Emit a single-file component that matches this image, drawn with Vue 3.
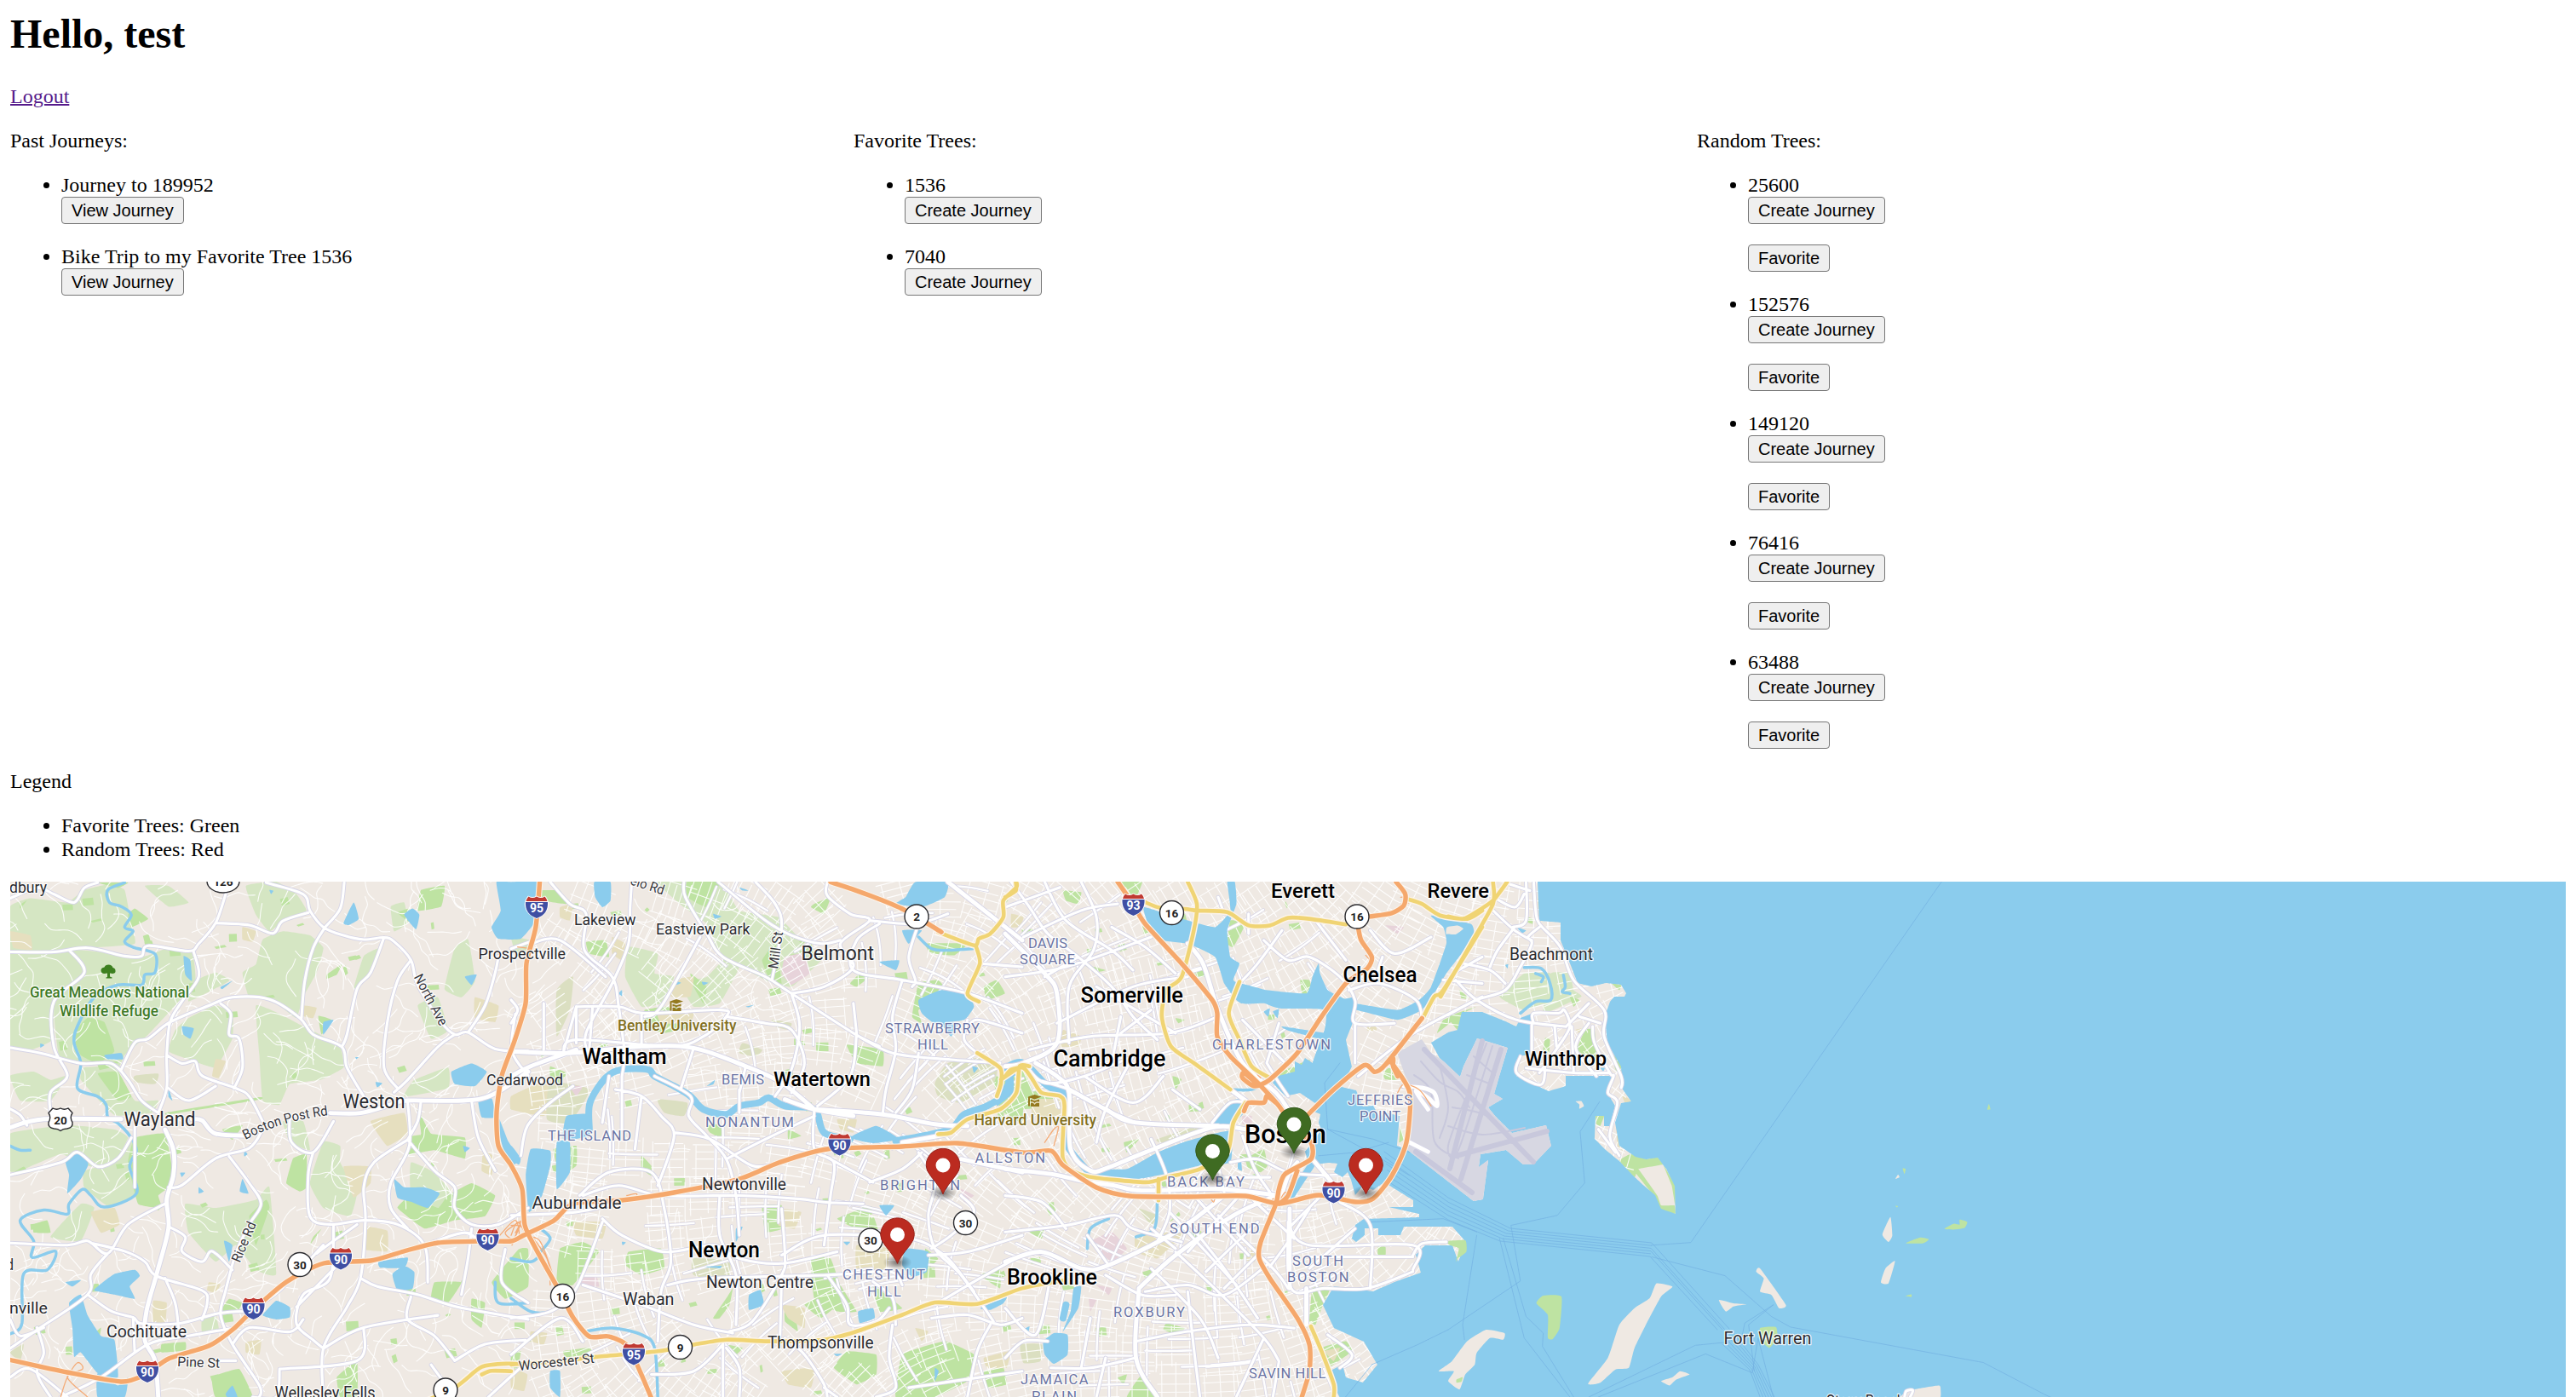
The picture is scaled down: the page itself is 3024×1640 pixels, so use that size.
<script setup>
const pastJourneys = ['Journey to 189952', 'Bike Trip to my Favorite Tree 1536']
const favoriteTrees = [1536, 7040]
const randomTrees = [25600, 152576, 149120, 76416, 63488]

/* Survey sheets: origin and scale of each sheet's local grid. */
const sheets = {
  A: [0, 880, 2.529, 2.063],
  B: [600, 1030, 2.6133, 2.5705],
  C: [1180, 1030, 2.8, 2.5705],
  D: [1700, 1030, 2.24, 2.5705],
  Z: [0, 0, 1, 1],
}

function points(sheet, s) {
  const [ox, oy, sx, sy] = sheets[sheet]
  return s.split(' ').map((p) => {
    const [x, y] = p.split(',').map(Number)
    return [ox + x / sx, oy + y / sy]
  })
}
const r = (n) => Math.round(n * 10) / 10

function curve(p, closed, k) {
  const n = p.length
  const at = (i) => (closed ? p[(i + n) % n] : p[Math.max(0, Math.min(n - 1, i))])
  let d = `M${r(p[0][0])} ${r(p[0][1])}`
  const last = closed ? n : n - 1
  for (let i = 0; i < last; i++) {
    const a = at(i - 1), b = at(i), c = at(i + 1), e = at(i + 2)
    d += `C${r(b[0] + (c[0] - a[0]) * k)} ${r(b[1] + (c[1] - a[1]) * k)} ${r(c[0] - (e[0] - b[0]) * k)} ${r(c[1] - (e[1] - b[1]) * k)} ${r(c[0])} ${r(c[1])}`
  }
  return closed ? d + 'Z' : d
}
function build(group, closed, k) {
  let d = ''
  for (const sheet in group) for (const s of group[sheet]) d += curve(points(sheet, s), closed, k)
  return d
}

const wood = build({
  A: [
    '30,380 90,360 200,370 250,340 330,325 370,340 385,400 400,470 260,480 120,490 30,485',
    '30,490 205,485 250,540 160,610 160,700 100,725 30,720',
    '205,485 300,490 430,500 500,480 570,490 580,560 520,620 440,690 370,740 350,770 240,755 175,740 160,610 250,540',
    '30,790 100,780 150,800 200,790 150,850 60,850',
    '250,770 340,770 400,850 470,850 450,880 340,885 240,800',
    '730,330 820,320 880,350 910,390 850,410 800,440 760,400',
    '780,460 840,440 920,450 960,480 940,540 900,600 880,650 830,620 800,600 740,600 720,540 760,520',
    '760,620 830,640 900,670 950,690 1010,720 1020,770 950,800 860,810 830,860 780,850 770,740',
    '30,930 200,910 340,920 380,940 340,1000 270,1010 180,980 60,1020 30,1020',
    '250,1020 340,1000 400,940 400,1080 320,1105 250,1060',
    '550,1100 640,1110 760,1090 800,1060 820,1270 760,1260 700,1200 640,1240 560,1170',
    '960,950 1010,960 1010,1000 1060,1070 1040,1130 960,1110 920,1050',
    '1350,480 1390,460 1410,560 1370,600 1320,580',
    '1080,500 1130,480 1100,540 1050,580', '580,560 640,540 680,560 560,610',
    '640,770 690,700 690,640 640,620 560,650 520,680 500,730 560,750',
    '840,900 860,950 920,970 900,900', '150,1180 240,1100 280,1110 240,1190',
    '1240,620 1300,600 1330,680 1280,700', '1220,1000 1280,1020 1340,1070 1300,1110 1220,1070',
    '1160,380 1200,370 1210,420 1170,440', '430,330 500,330 560,370 500,380',
    '1230,800 1330,770 1330,820 1200,840', '600,1380 640,1370 650,1410 600,1410',
  ],
  B: [
    '360,210 450,230 440,290 500,300 460,380 400,390 350,300',
    '450,14 640,14 700,100 820,120 900,200 960,240 860,330 780,310 640,230 600,140 530,90',
    '520,320 600,300 660,240 700,270 640,380 560,390',
    '0,180 60,190 60,210 20,240',
  ],
  C: [],
  D: ['200,290 270,290 270,370 200,400 135,360', '270,290 320,290 330,340 350,360 250,410'],
}, true, 0.06)

const park = build({
  A: [
    '400,940 490,930 510,1010 500,1060 470,1080 480,1110 410,1100 380,1000',
    '870,990 910,980 910,1060 890,1070 850,1050',
    '1240,870 1280,930 1380,940 1380,990 1290,970 1210,980 1250,930',
    '1180,1110 1220,1080 1300,1110 1330,1080 1400,1050 1470,1080 1440,1130 1350,1140 1260,1160',
    '215,690 260,650 310,660 340,730 290,760 240,740', '630,1520 710,1500 750,1568 640,1568',
    '680,1330 720,1340 700,1365 655,1360', '1250,340 1320,330 1310,380 1240,390',
    '1290,1290 1370,1290 1330,1340 1280,1330', '1460,1290 1540,1210 1568,1210 1568,1300 1500,1330',
    '380,400 400,385 440,410 390,430', '970,545 1015,520 1000,545 970,555', '930,1180 955,1160 920,1200',
    '945,645 985,655 955,690', '100,1150 140,1140 150,1170 100,1170', '480,1440 550,1435 550,1455 480,1460',
    '290,785 350,780 390,840 350,850', '740,1130 790,1090 800,1110 760,1200',
    '1400,1330 1440,1340 1430,1400 1400,1380', '1000,1520 1060,1480 1060,1568 1010,1568',
    '660,920 720,910 690,945', '30,1030 70,1010 80,1020', '1180,395 1215,385 1220,420', '290,322 380,322 350,335',
    '60,375 80,365 60,385', '260,1430 300,1400 290,1440', '500,878 770,842 770,848 500,884',
  ],
  B: [
    '230,195 290,190 300,240 240,230', '540,14 640,14 600,90 540,60', '770,250 810,200 830,320 790,300',
    '410,400 480,390 520,430 560,450 470,470 400,450', '550,290 600,330 590,380 560,330',
    '1250,320 1310,310 1340,350 1250,400 1260,440 1230,420', '1030,505 1140,520 1140,570 1060,560',
    '1450,330 1490,310 1515,350 1460,370', '150,1120 220,1100 270,1130 190,1230 140,1220',
    '360,1130 460,1120 470,1180 400,1200 350,1170', '770,990 830,990 830,1060 780,1070',
    '1000,1030 1080,1000 1120,1050 1060,1060', '920,1150 980,1150 1010,1230 1060,1310 1000,1310 930,1270',
    '990,1480 1030,1430 1120,1440 1120,1500 1060,1530', '1200,1440 1330,1400 1420,1440 1400,1520 1300,1568 1180,1568',
    '160,1430 240,1420 240,1450 170,1450', '1110,1230 1200,1300 1130,1310', '1480,600 1568,620 1568,740 1500,700',
    '80,40 150,40 170,80 100,70', '0,670 70,660 60,700 0,700', '130,820 200,810 200,870 150,900',
    '120,570 170,590 150,620 120,600', '930,80 980,60 960,110 920,90', '1270,200 1400,200 1360,235 1290,230',
    '1040,320 1070,290 1100,300 1060,330', '850,760 890,780 850,790', '600,750 640,745 650,790 610,770',
    '400,840 430,870 430,900 400,880', '680,1240 670,1290 640,1330 620,1330 660,1270',
    '840,1300 870,1320 880,1370 840,1340', '0,1440 30,1430 20,1480 0,1480', '1450,1490 1510,1480 1520,1530 1460,1540',
    '1440,1200 1500,1180 1500,1240', '660,1410 710,1420 690,1440', '1270,1120 1310,1150 1280,1180',
    '1110,1020 1140,1110 1130,1150 1090,1150', '900,1290 960,1260 1000,1290 950,1330', '500,380 540,450 520,460',
  ],
  C: [
    '790,850 850,820 862,870 840,890 800,880', '20,610 60,580 90,640 170,670 170,690 20,700',
    '1240,590 1270,570 1290,610 1250,610', '1010,1240 1070,1235 1040,1300 1020,1350 1000,1340',
    '970,310 1000,310 1010,340 1060,350 1060,365 980,360', '190,40 250,45 240,80 200,70',
    '1040,1420 1120,1400 1140,1430 1060,1480', '400,1568 450,1500 500,1568', '880,600 1000,550 990,590',
    '530,1345 590,1360 570,1380 520,1365', '740,130 790,140 750,210 730,200', '380,14 450,14 430,60 390,40',
    '550,600 580,610 560,640', '250,260 330,280 300,285', '1300,750 1310,790 1295,800', '80,1070 130,1050 120,1090',
    '1225,1115 1250,1115 1250,1140 1225,1140', '660,1230 680,1240 670,1260', '560,425 590,430 570,440',
    '390,800 440,790 400,830', '540,1040 570,1010 575,1020', '900,640 950,600 1020,570 960,620',
    '370,1510 400,1500 390,1530', '500,90 590,110 600,160 520,110', '1440,430 1500,410 1420,470',
  ],
  D: [
    '360,460 385,460 390,560 340,520', '450,855 480,835 520,850 550,845 570,865 500,880 490,905',
    '485,880 500,880 550,960 560,990 595,990 597,1015 560,1005 540,960', '0,420 75,390 40,410 25,460',
    '388,720 410,720 400,750 390,745', '430,530 455,560 455,600 440,580', '210,120 222,125 222,140 208,135',
    '320,360 345,370 330,390', '430,320 455,325 450,340', '255,485 268,490 265,530 250,520', '30,340 55,365 35,365',
    '565,865 597,930 597,990 588,930',
  ],
}, true, 0.05)

const sand = build({
  A: [
    '1020,1010 1100,1010 1100,1050 1050,1085', '640,750 670,755 650,795 630,790', '1080,1155 1150,1165 1150,1215 1080,1210',
    '1100,900 1200,880 1210,930 1150,960', '270,1120 340,1110 355,1150 300,1170', '1410,600 1480,620 1470,660 1410,650',
    '730,1435 775,1430 770,1465 730,1460', '455,1335 495,1340 490,1390 455,1390', '30,440 90,450 95,485 40,480',
    '900,620 940,625 930,650 900,645', '720,430 760,440 750,465 720,460', '620,1290 655,1295 640,1315 615,1310',
    '1435,970 1465,985 1460,1030 1430,1020',
  ],
  B: [
    '450,410 560,400 550,440 460,440', '500,310 560,300 550,360 490,360', '0,660 90,620 170,650 100,720 0,700',
    '190,1040 290,1040 280,1090 200,1080', '830,1000 890,1010 870,1060 820,1050', '1060,1110 1160,1120 1150,1190 1060,1180',
    '830,1290 900,1300 900,1360 850,1330', '830,1490 930,1480 920,1540 850,1530', '1000,730 1060,730 1050,770 1010,760',
    '150,90 190,80 180,130 150,120', '310,180 350,200 340,250 310,230', '60,1370 110,1375 100,1410 60,1400',
    '1450,1450 1530,1430 1520,1480 1460,1480', '0,1480 50,1500 40,1550 0,1540', '1240,1360 1280,1370 1260,1400',
  ],
  C: ['190,460 250,480 240,510 180,510', '430,1080 590,1070 500,1150 430,1130', '1190,450 1220,450 1220,462 1190,462', '20,110 60,120 50,150 20,150', '780,1150 830,1110 820,1160', '1050,1430 1100,1420 1080,1460', '90,670 190,670 185,720 90,720'],
  D: ['455,650 482,675 465,680', '235,60 250,130 240,130', '440,700 450,810 465,830 445,810', '335,460 355,455 350,475'],
}, true, 0.05)

const olive = build({
  B: [
    '1340,560 1440,545 1490,570 1480,620 1380,680 1310,660 1300,620', '450,670 540,680 530,720 470,710',
    '710,500 770,520 750,540 700,530', '560,1150 670,1160 660,1220 560,1200', '120,620 240,640 180,740 110,730',
    '800,430 860,440 850,460 810,450', '140,340 190,300 180,400 140,480',
  ],
  C: ['500,790 660,740 640,770 520,800', '50,1410 120,1410 115,1460 60,1465', '440,1000 500,1020 480,1050'],
  A: ['400,790 470,785 460,810 400,805', '30,1460 70,1440 60,1480'],
}, true, 0.08)

const pink = build({
  B: ['840,240 900,230 915,290 860,325 830,290', '210,1210 260,1200 270,1235 215,1230', '180,630 220,630 200,660', '1380,940 1420,960 1390,980'],
  C: ['280,1100 350,1070 400,1120 350,1160', '300,1230 350,1240 340,1260', '275,1270 300,1275 280,1310', '780,720 810,720 810,745 780,745', '1250,145 1310,150 1290,170'],
}, true, 0.05)

const lakes = build({
  A: [
    '195,1000 220,975 250,980 262,1005 240,1040 200,1075 205,1030', '290,1300 340,1270 400,1260 415,1275 385,1300 400,1330 340,1320 280,1310',
    '205,1340 240,1320 260,1370 300,1420 340,1430 350,1520 290,1510 240,1460 220,1470 215,1400',
    '1170,1040 1200,1060 1260,1060 1305,1075 1270,1110 1220,1095 1180,1085', '780,1370 820,1335 860,1350 860,1375 820,1380',
    '1340,780 1400,760 1445,780 1410,815 1350,810', '1200,400 1225,385 1245,400 1235,435', '1165,1270 1200,1250 1230,1265 1225,1305 1180,1310',
    '1125,1240 1210,1230 1200,1255 1130,1255', '960,660 990,655 960,690', '540,670 575,675 565,700 545,690',
    '1420,850 1460,845 1470,890 1430,890', '1480,890 1510,950 1545,990 1540,1005 1500,980 1482,930',
    '1020,420 1050,370 1065,410 1035,425', '310,740 360,735 365,750 320,750', '545,500 565,510 570,560 550,545',
    '655,575 690,560 660,580', '720,1040 738,1075 712,1070', '665,1190 690,1200 680,1240', '1380,550 1415,545 1400,570',
    '290,1510 350,1540 380,1520 370,1568 290,1568', '500,820 512,850 500,840', '590,1060 605,1070 590,1075', '535,1025 550,1025 540,1035',
    '725,970 735,980 725,985', '120,712 132,716 120,722', '1375,960 1395,965 1380,975', '195,1290 240,1285 215,1300', '670,1560 690,1540 705,1568 675,1568',
    '800,340 812,342 805,350', '1115,805 1135,808 1120,818', '1055,745 1065,745 1058,750',
  ],
  B: [
    '0,14 90,14 75,130 30,185 -40,185 -60,150 -32,100 -45,14', '255,14 305,14 305,70 280,90 258,60', '1180,80 1210,60 1240,14 1340,14 1330,60 1260,90',
    '1200,160 1260,160 1220,200', '1250,370 1320,340 1400,350 1420,390 1390,430 1300,440 1260,410', '1320,440 1370,440 1350,480',
    '1130,255 1190,250 1180,280', '1210,1120 1280,1130 1275,1190 1230,1205 1200,1170', '730,1260 765,1245 775,1290 730,1305',
    '1065,1310 1110,1300 1115,1330 1070,1345', '690,1060 710,1055 690,1100', '60,820 120,825 120,870 95,960 55,1010 45,900',
    '140,800 180,800 180,890 140,940', '0,810 30,850 0,870', '170,720 245,715 240,780 160,790', '1130,990 1175,990 1150,1020',
    '1440,1300 1520,1265 1510,1285 1470,1305', '120,1490 150,1490 150,1568 120,1540', '1040,785 1120,750 1190,790 1110,802',
    '600,630 625,612 620,625', '720,390 745,385 730,392', '330,350 340,340 340,358', '500,312 522,318 505,325', '620,110 645,118 625,125',
    '585,315 605,318 590,325', '590,1175 645,1172 640,1180', '340,1100 352,1102 342,1110', '1020,1100 1040,1100 1030,1110', '1300,1480 1312,1490 1300,1520',
    '1415,570 1432,575 1420,590', '1500,640 1540,600 1540,650 1490,690', '990,1438 1015,1438 1000,1445', '700,30 730,40 710,40',
  ],
  C: [
    '770,320 860,340 990,350 1010,300 1030,260 1035,290 1060,340 1100,360 1150,380 1290,400 1360,370 1400,330 1450,200 1440,150 1400,115 1530,140 1540,170 1500,230 1450,290 1410,350 1370,400 1290,430 1150,400 1120,420 1110,600 1010,570 1050,460 1050,400 900,395 850,380 780,380',
    '455,90 530,110 600,130 690,150 740,100 730,14 755,14 760,80 730,160 740,240 770,260 750,310 780,330 780,380 760,370 720,320 690,240 600,200 520,190 470,140',
    '260,900 300,880 400,880 500,830 600,795 740,765 740,860 640,870 500,900 400,915 300,905', '730,680 785,665 785,710 740,750 680,740',
    '910,450 1050,470 1045,490 930,462', '125,1400 160,1375 205,1380 205,1440 160,1468 130,1440', '190,1370 215,1310 225,1240 250,1235 240,1300',
    '765,860 775,850 778,885 765,880', '60,1365 80,1355 75,1375', '850,405 870,395 865,420', '880,405 900,398 895,425',
  ],
  D: ['180,150 205,160 195,168', '150,265 158,262 156,275', '400,575 412,575 408,585'],
}, true, 0.07)

/* Harbour and open sea, following the shoreline from Revere round to Dorchester. */
const sea = build({
  Z: ['1805,1035 1807,1081 1832,1083 1832,1104 1843,1131 1852,1154 1868,1158 1885,1154 1903,1156 1909,1166 1907,1170 1895,1170 1890,1176 1884,1193 1887,1225 1903,1252 1905,1279 1915,1293 1903,1295 1896,1318 1901,1345 1920,1358 1932,1361 1946,1359 1956,1372 1966,1392 1967,1425 1950,1419 1943,1403 1930,1392 1917,1380 1901,1363 1885,1350 1872,1337 1873,1310 1883,1310 1883,1322 1890,1322 1896,1298 1887,1283 1892,1263 1870,1263 1838,1263 1838,1275 1818,1281 1780,1263 1783,1240 1796,1238 1798,1190 1785,1195 1780,1205 1765,1198 1740,1188 1716,1188 1711,1209 1700,1212 1680,1224 1690,1242 1714,1264 1718,1252 1734,1219 1770,1230 1754,1284 1764,1290 1747,1300 1755,1310 1775,1330 1815,1321 1821,1345 1800,1367 1788,1367 1768,1350 1738,1355 1736,1370 1747,1362 1741,1408 1730,1410 1651,1349 1640,1345 1643,1310 1625,1306 1620,1312 1612,1298 1600,1299 1592,1280 1575,1276 1587,1252 1580,1221 1591,1193 1591,1170 1573,1174 1555,1209 1541,1248 1532,1242 1528,1250 1520,1246 1520,1258 1501,1263 1494,1271 1509,1287 1526,1283 1544,1295 1543,1305 1550,1308 1548,1318 1551,1326 1544,1337 1532,1352 1537,1368 1559,1365 1570,1366 1566,1376 1576,1382 1582,1376 1586,1385 1591,1403 1600,1392 1612,1397 1625,1388 1659,1409 1659,1417 1630,1417 1666,1425 1666,1429 1601,1431 1591,1438 1587,1454 1592,1458 1602,1450 1602,1442 1618,1442 1618,1450 1644,1450 1648,1440 1705,1440 1721,1458 1712,1481 1705,1462 1673,1462 1662,1473 1668,1494 1637,1505 1612,1516 1566,1510 1553,1532 1566,1559 1601,1575 1617,1602 1600,1623 1580,1617 1576,1602 1560,1610 1567,1629 1575,1645 3020,1645 3020,1030'],
}, true, 0)

const islands = build({
  D: [
    '820,1180 888,1290 870,1300 850,1260 820,1250 830,1210 810,1190', '712,1275 750,1285 785,1288 750,1295 730,1310', '548,1225 590,1235 560,1265 520,1350 490,1420 475,1480 440,1485 400,1525 368,1528 420,1450 450,1350 490,1300 530,1270',
    '-25,1490 10,1460 50,1400 100,1365 148,1375 145,1395 110,1390 75,1435 70,1470 45,1500 30,1545 0,1520 15,1490', '560,1520 590,1508 610,1490 635,1500 600,1515 582,1533',
    '1163,1025 1168,1080 1158,1100 1142,1078', '1175,1158 1158,1225 1138,1222 1150,1180', '1195,1560 1225,1545 1290,1533 1295,1545 1290,1575 1190,1575',
    '1183,897 1187,905 1176,910', '335,676 350,675 357,690 345,698 345,685', '-3,150 25,145 40,155 20,172 -5,170',
  ],
}, true, 0.08)
const greenIslands = build({
  D: [
    '232,1285 250,1262 298,1265 293,1360 275,1393 262,1390 262,1320', '820,1360 862,1357 865,1390 845,1420 825,1400',
    '1305,1060 1330,1045 1345,1048 1345,1033 1365,1040 1358,1058 1330,1063', '1203,1104 1240,1087 1264,1092 1250,1104',
    '1195,878 1203,880 1200,895', '1202,1263 1218,1258 1218,1266', '1422,684 1426,700 1418,700', '1176,991 1183,992 1180,996',
    '22,1515 38,1508 35,1522 22,1525', '-5,1098 45,1095 48,1130 25,1150 20,1160 28,1120 5,1110',
  ],
}, true, 0.08)
const creeks = build({ D: ['200,272 245,275 268,320 270,370 230,375 190,410', '230,290 250,300 245,315', '303,295 308,330 300,345 320,350'] }, false, 0.16)

const airport = build({
  Z: ['1640,1236 1669,1220 1680,1236 1695,1246 1714,1264 1718,1252 1734,1219 1770,1230 1754,1284 1764,1290 1747,1300 1755,1310 1775,1330 1815,1321 1821,1345 1800,1367 1788,1367 1768,1350 1738,1355 1736,1370 1747,1362 1741,1408 1730,1410 1651,1349 1657,1283'],
}, true, 0)
const runways = build({ Z: ['1740,1222 1702,1372', '1762,1232 1715,1384', '1672,1232 1800,1364', '1709,1357 1816,1328', '1662,1352 1728,1400'] }, false, 0)
const taxiways = build({
  Z: ['1752,1228 1712,1350 1700,1345 1720,1290', '1668,1246 1690,1270 1712,1282 1725,1300', '1660,1262 1680,1282 1684,1340 1712,1360', '1690,1250 1700,1300 1690,1336', '1722,1262 1748,1272', '1730,1240 1755,1262', '1705,1300 1745,1310 1775,1342', '1700,1322 1740,1332 1790,1324', '1745,1225 1730,1262'],
}, false, 0.16)

const rivers = build({
  A: ['370,322 320,340 325,370 360,380 390,400 370,430 395,440 370,465 400,480 460,495 460,540 430,545 420,570 350,570 280,600 230,670 220,710 240,760 230,820 290,840 315,860 320,890 350,905 385,935 405,970 385,1010 405,1075 310,1108 270,1080 245,1065 205,1100 200,1125 130,1115 60,1140 100,1190 95,1230 165,1215 140,1260 70,1270 65,1390 30,1415', '30,960 60,970 90,970', '1470,1290 1480,1340 1568,1340'],
  B: ['90,1060 120,1090 90,1130', '0,1150 60,1160 90,1140', '0,1270 60,1310 120,1310 160,1280', '230,1370 310,1360 400,1380 440,1420 450,1568', '1250,180 1290,215 1340,220 1420,215'],
  C: ['270,1120 280,1060 340,1030', '430,1085 490,1060 500,980', '740,640 810,640 870,612'],
}, false, 0.16)
const wideRivers = build({
  B: ['240,760 242,680 290,605 340,580 420,580 440,600 500,630 550,660 590,700 660,715 700,690 760,680 790,665 840,690 930,700 960,770 1040,790', '1180,795 1340,762 1390,715 1460,690 1520,650 1530,600 1568,570'],
  C: ['0,575 60,560 140,630 195,650 205,700 200,800 270,885', '1005,870 930,975', '190,1330 200,1290'],
}, false, 0.16)

const streets = build({
  A: [
    '30,360 110,335 160,350 220,370 250,335 290,322', '30,490 160,490 260,480 370,500 420,500 440,475 560,488 590,470 640,420 670,350',
    '640,420 740,425 810,445 840,415 915,395', '790,322 900,350 920,390 960,430 1020,450 1080,460 1140,455 1170,465 1220,510 1240,570 1310,660 1350,690 1390,685 1470,725 1568,730',
    '965,430 1010,385 1022,322', '965,430 930,480 905,560 895,650', '205,485 250,540 160,610 160,720 200,790 150,830 150,880',
    '30,722 120,735 240,760 330,760 380,800 420,850 470,880', '575,490 590,550 540,610 505,660 495,740 495,820 470,880',
    '360,775 400,710 440,700 505,660 620,620 690,600 800,605 890,650 930,690 1015,720 1030,770 1080,840', '655,615 685,640 680,690 710,700 720,770 695,820',
    '495,740 540,760 580,755 600,790 700,820 740,840 780,900', '500,820 560,850 640,815', '1140,455 1100,540 1060,580 1030,690 1015,720',
    '1220,510 1180,560 1150,660 1140,770 1180,820', '1350,690 1300,720 1210,800 1170,830', '30,1030 180,1000 230,975 290,1010 350,990 390,940',
    '500,1060 540,1055 640,990 740,965 780,920', '680,985 740,1050 775,1100 740,1150 700,1220 670,1310 655,1370 690,1440 770,1540 770,1568',
    '30,1195 200,1200 260,1190 320,1220 380,1150 490,1100', '500,1155 550,1180 540,1215 600,1240 630,1215 690,1260',
    '270,1195 370,1215 430,1240 465,1275 600,1310 615,1340 600,1380', '320,1220 270,1270 260,1320 120,1400 30,1450',
    '260,1320 330,1360 395,1375 420,1390 530,1390 650,1365 740,1360', '860,890 865,950 930,975 990,900',
    '930,975 915,1030 920,1130 980,1150 1080,1140 1180,1150 1260,1200 1270,1290', '1210,850 1215,960 1160,1050 1160,1110 1210,1160',
    '1210,945 1110,1000 1080,1060 1085,1140 1070,1280 1030,1350 960,1450 960,1568', '1210,945 1290,1020 1350,1060 1350,1110 1400,1150 1480,1150 1568,1110',
    '1250,850 1240,900 1210,945', '990,1155 980,1280 900,1320 880,1390 930,1430 960,1450', '690,1440 740,1400 860,1410 900,1380',
    '940,1220 990,1190 1060,1150', '1070,1280 1120,1300 1240,1320 1360,1350 1568,1380', '1220,1325 1210,1380 1290,1420 1350,1480',
    '1400,1160 1390,1230 1370,1320', '1500,1210 1490,1290 1568,1340', '30,1380 60,1420 130,1400', '180,1568 300,1520 440,1440 560,1420 700,1400',
    '960,1450 1080,1400 1300,1370', '830,1500 1060,1480 1080,1400', '1400,850 1420,940 1470,1020', '1390,685 1440,620 1470,540 1480,500',
    '1530,640 1520,730 1568,790', '400,880 400,1060', '30,870 60,885 80,910', '110,1400 130,1460 110,1510 150,1568', '30,1520 90,1500 200,1568',
    '740,1360 830,1310 960,1200', '700,1480 640,1480', '750,1568 820,1568 830,1500', '880,1350 1000,1250', '1260,1200 1380,1170 1430,1200',
    '490,1280 520,1340 530,1400', '395,1375 400,1460', '1350,1480 1440,1440 1560,1430', '1280,1490 1350,1568', '1450,1568 1568,1480',
  ],
  B: [
    '120,14 180,80 230,110 225,220 310,300 330,390 350,540', '370,14 365,90 360,200 310,320 230,470 240,540', '530,14 535,60 600,170 650,240 780,300 860,350 1050,470 1130,510',
    '635,14 780,130 860,175 950,200 1010,190', '750,14 810,80 830,150 800,310', '970,14 970,55 1040,110 1100,130 1010,200 1050,270 960,330 860,350',
    '1130,140 1060,190 1050,280 1200,310 1400,350 1568,410', '1250,140 1220,240 1240,310 1230,330', '1340,110 1240,140 1100,130',
    '200,390 330,390 410,410 640,400 660,420 590,480 490,510 200,490 160,530', '580,180 460,390 410,420', '190,630 120,680 50,750 30,840',
    '440,600 550,660 545,720 600,780 660,850 690,960 700,1080', '660,420 780,440 860,460 900,560 860,650', '860,350 885,450 860,580 810,660',
    '1050,470 1170,530 1350,550 1500,560', '940,690 1040,600 1060,470', '930,700 930,820 990,860 980,960 960,1110', '660,850 780,790 930,720',
    '500,770 610,790 740,870 820,860', '320,640 400,660 460,720 500,780 450,930', '210,960 300,890 430,890 470,1000 490,1160 460,1250 450,1400',
    '220,960 330,930 460,960 700,960 880,970 960,980 1080,985', '0,1020 200,1010 340,980', '280,1030 340,1080 470,1130 620,1110 700,1150 830,1165 1000,1130',
    '640,960 640,1080 690,1200 690,1350', '830,1000 840,1140 830,1200 740,1340 670,1370', '480,1230 600,1210 970,1200 1160,1190 1200,1230',
    '220,1230 400,1290 560,1350 680,1375', '830,1200 825,1390', '970,1200 1030,1290 1040,1350 1120,1340 1160,1300', '1280,1140 1400,1130 1568,1080',
    '1300,1120 1220,1090 960,1080 830,1140', '1250,830 1300,920 1280,1020 1300,1120 1380,1200 1480,1340', '1380,960 1420,1010 1350,1080 1290,1120',
    '1100,920 1200,880 1260,830', '960,840 1110,920', '0,1330 120,1310 200,1240 280,1040', '0,1440 150,1330 220,1400', '1170,1350 1160,1450 1180,1540 1120,1568',
    '840,1390 900,1440 960,1530 970,1568', '650,1400 650,1568', '1400,1568 1430,1430 1470,1350', '1220,1540 1568,1490', '0,370 20,400 0,440',
    '60,200 150,190 290,300', '70,190 0,215', '200,390 200,500', '400,410 400,510', '350,540 340,600', '430,1500 560,1490 650,1410', '700,1568 700,1480 660,1420',
    '1180,1350 1170,1270 1110,1220', '1290,1330 1400,1320 1500,1350 1568,1330', '1000,1568 960,1540', '1200,310 1170,420 1180,520 1150,640 1140,715',
    '700,640 700,710', '1250,530 1230,640 1180,710', '1050,380 1060,470', '100,380 100,520', '1440,260 1568,270', '1400,470 1430,430 1568,470', '1430,530 1390,490 1400,430',
    '1300,1120 1350,1160 1420,1250', '1568,1140 1420,1220 1300,1290', '160,530 200,390', '250,390 240,520', '300,600 280,740', '340,600 340,760', '400,660 380,820', '560,515 520,640', '720,570 700,650',
  ],
  C: [
    '20,14 80,90 140,170 240,240 350,330 420,420 500,490', '130,14 200,130 350,220 420,280', '250,14 300,120 290,220 210,330 210,500', '60,180 250,100 370,80',
    '0,300 200,270 480,180', '170,440 420,330 600,300', '80,520 280,480 540,470 700,420', '910,160 830,260 770,320', '1020,130 1120,250',
    '850,190 930,250 1000,240 1100,300 1150,370 1150,440 1280,440', '1150,440 1150,560', '1568,360 1400,440 1310,490 1160,600', '1370,430 1350,370 1230,320 1130,340',
    '100,610 210,640 330,700 430,740', '260,600 420,680 520,600', '420,540 330,700 300,800', '680,740 740,680 800,680', '480,790 530,900 540,1010 500,1100',
    '740,860 830,850 930,890 1060,900', '780,780 820,880 870,950', '700,870 720,950', '0,1070 200,1050 360,1020 420,1060 580,1100',
    '560,1130 700,1250 850,1390 900,1460', '600,1040 720,1180 830,1330', '0,1300 100,1380 150,1200', '270,1080 340,1170', '460,1250 600,1230 720,1260 860,1170',
    '700,1020 880,1180 930,1240', '930,1040 1000,1110 1340,1110 1340,1185', '1000,1145 1340,1145', '930,1040 940,1240 1050,1240 1190,1240 1340,1190',
    '1340,1140 1370,1105 1450,1100', '1100,980 1200,1050 1200,1240', '1000,1000 930,1100 870,1175', '430,1400 600,1370 800,1350 950,1360', '150,1480 280,1480 430,1450',
    '280,1330 250,1480', '640,1568 620,1420 600,1250', '850,1390 760,1568', '1060,1380 1140,1440 1100,1480', '800,110 800,170', '700,60 720,110', '380,420 350,560',
    '300,330 560,470', '0,90 180,30', '350,150 460,210 560,290', '480,400 380,470', '130,300 240,240', '60,560 130,620 260,600 420,540', '550,640 640,700',
    '860,560 900,620 930,660', '780,430 920,560', '900,440 860,560', '1150,1060 1000,1180', '1050,950 930,1060', '800,960 950,1090', '620,960 800,1140',
    '480,1180 640,1330 700,1450', '330,1200 450,1260 560,1260', '0,1450 60,1400 140,1400', '300,1568 330,1450', '900,1460 880,1568', '1200,160 1280,230 1400,180', '1240,240 1210,320',
    '1440,310 1568,320', '1568,240 1470,290', '540,1010 760,1230', '600,1130 760,970', '660,1190 830,1040', '720,1240 840,1130', '0,960 120,980 200,1060', '700,905 870,905', '560,1120 480,1060',
  ],
  D: [
    '225,14 230,100 240,140 295,210 330,310 410,400 410,480 455,600 455,635', '118,100 175,160 220,190', '175,150 130,220 110,270', '240,150 210,180 220,200 190,270 150,340 75,370 0,415',
    '20,310 75,370 180,430 310,450', '40,260 110,280 150,320', '225,440 225,410 290,410 305,400 320,450 290,510 240,590', '310,450 370,380', '370,440 340,490 340,530 390,600',
    '380,450 385,500 425,590 435,600 420,650 445,680 425,780 450,840', '190,540 180,590 245,625 255,560', '220,440 220,535', '205,575 330,590 425,590', '120,60 175,90 200,50',
    '160,20 215,40', '205,14 205,130 170,150', '325,450 330,590', '345,420 400,440', '280,450 285,510', '1200,1568 1205,1550 1222,1548 1215,1568', '395,760 440,830',
  ],
}, false, 0.16)

const arterials = build({
  A: ['30,915 130,895 360,895', '570,895 600,898 640,930 740,935', '980,880 1070,880 1160,860 1210,850 1430,845 1568,780', '490,920 515,970 515,1030 495,1090 500,1160 465,1270 435,1360 430,1430 460,1480 470,1568'],
  B: ['1340,14 1568,190', '0,525 180,530 400,510 560,515 720,570 830,620 930,700', '200,520 60,570 0,600', '930,700 1140,715 1300,745 1400,750', '1200,800 1340,775', '1380,850 1568,890', '840,670 930,700 1050,720'],
  C: ['0,170 130,290 170,350 170,500 60,560 0,570', '600,200 650,260 700,400 780,560 890,650 930,700', '0,880 150,895 250,915 360,930 450,945 700,940 900,960', '100,560 170,600 210,650 215,820 280,885 340,875 460,830 680,755 790,760', '0,1160 120,1130 250,1180 340,1170 560,1070 720,960', '440,1240 560,1140 750,1020 890,960', '440,1240 430,1450 500,1568', '1010,850 1110,960', '990,1240 990,1350', '960,860 930,900 900,985', '1310,630 1370,635 1410,650 1420,690 1390,665 1350,645 1390,700', '1330,800 1390,828', '100,610 60,560', '935,1000 935,1240', '210,640 330,700 430,740 700,750', '740,640 800,680'],
}, false, 0.16)

const trunk = build({
  B: ['0,1470 150,1460 260,1447 450,1430 560,1410 660,1395 790,1400 960,1395 1060,1370 1200,1320 1300,1283 1430,1287 1568,1240 1700,1215', '1310,165 1420,205 1435,185 1470,170 1510,120 1510,70 1550,30 1550,14', '1425,205 1438,260 1400,350 1435,375', '1430,530 1500,575 1503,620 1490,660', '1310,775 1350,770 1400,730 1500,700 1550,650 1560,570 1590,570', '1503,610 1560,572', '-90,1500 -60,1489 0,1490'],
  A: ['1200,1600 1350,1545 1430,1495 1510,1487 1568,1490'],
  C: ['0,600 20,580 60,575 90,610 120,650 180,660 195,690 190,850 260,900 460,920 530,905 640,880 730,830 750,740 790,680', '504,910 504,975', '600,14 630,80 620,160 580,300 530,340 515,420 545,510 620,560 740,640', '460,75 510,92 590,95 630,100 730,105 800,145 870,145 930,122 1000,125 1120,142', '770,315 735,410 770,490 810,570 870,605', '1320,65 1370,80 1430,115 1520,125 1568,100', '1568,150 1440,340 1410,360 1370,430', '1005,1355 1040,1430 1080,1530 1080,1568', '0,60 35,40 35,14'],
  D: ['-20,360 60,200 118,80 118,14', '0,118 40,125 80,100 118,70 155,14'],
}, false, 0.12)

const motorway = build({
  Z: [
    '634,1030 629,1088 618,1131 617,1178 604,1222 589,1263 583,1306 585,1345 600,1368 613,1396 616,1438 629,1466 657,1516 673,1547 692,1569 715,1569 738,1582 765,1642',
    '10,1596 79,1611 142,1622 170,1614 198,1595 245,1580 273,1561 296,1539 336,1505 380,1483 435,1480 474,1469 514,1459 569,1457 600,1457 615,1450 650,1433 673,1413 730,1409 791,1400 868,1384 914,1365 971,1349 1059,1346 1124,1342 1200,1353 1234,1351 1248,1368 1287,1394 1326,1404 1394,1405 1462,1404 1501,1413 1548,1403 1591,1411 1612,1407 1634,1380 1651,1341 1655,1283 1634,1248',
  ],
  B: ['980,14 1060,40 1200,95 1320,165'],
  C: [
    '370,14 420,80 460,140 580,260 680,370 697,410 697,480 740,540 830,620 900,690 950,760 1005,800 1005,850 920,895 900,940 890,985 840,1100 835,1150 870,1210 960,1330 1000,1410 1000,1490 975,1568',
    '1160,150 1170,190 1205,240 1190,275 1120,320 1040,420 960,530 870,610 820,630 780,605 785,590 830,625', '785,705 800,680 850,680 860,660 890,680',
    '980,730 1080,640 1180,567 1215,587 1250,565 1370,425', '1250,565 1275,545 1275,570 1290,600', '1285,14 1315,50 1310,85 1270,108 1200,118', '960,885 930,960 900,985',
  ],
}, false, 0.12)

const ramps = build({
  A: ['180,1568 200,1520 230,1485 245,1500 200,1520 260,1568', '1480,1180 1530,1140 1540,1190 1500,1170 1550,1140', '1520,1200 1545,1150 1530,1170'],
  B: ['0,1080 20,1040 50,1080 90,1100 130,1210 100,1180', '0,1050 40,1060 110,1150 120,1230', '30,1040 10,1090', '355,960 385,955 380,970', '20,210 60,215'],
  C: ['130,800 160,760 175,755 160,810', '1290,650 1310,625 1360,640 1400,690', '900,980 920,950 935,970 910,990', '670,960 685,980 690,960', '460,140 458,155 475,160', '690,450 690,480 705,480', '1185,235 1200,250', '840,605 830,595 850,600', '880,1010 880,970 940,980', '1300,60 1330,60 1330,75 1300,80'],
}, false, 0.16)

const ferries = (() => {
  let d = build({
    D: [
      '1297,14 638,1102 535,1110', '398,677 347,767 359,922 287,1020 165,1050 190,1218 0,1365', '535,1145 728,1202 850,1325 900,1357 1407,1464 1568,1560 1700,1630',
      '75,1080 38,1350 43,1395', '135,1090 200,1390 320,1568', '145,1090 205,1325 250,1375 248,1415 330,1568', '370,1568 650,1412 740,1402', '395,1568 677,1438 800,1495 815,1390 855,1568',
      '855,1290 780,1345 770,1400', '855,1290 790,1350 805,1490', '-200,1470 -80,1410 0,1365', '-200,1470 -270,1568',
    ],
    C: ['1060,760 1050,620 1100,560', '1060,760 1210,790 1330,830', '1060,760 1200,830 1330,900', '1030,840 1150,830 1260,800', '1200,1040 1440,1030 1550,1070'],
  }, false, 0)
  for (let i = 0; i < 6; i++) {
    const s = i / 5
    d += `M${1625 + s * 6} ${1352 + s * 36}L1700 ${1406 + s * 26}L${1773 - s * 12} ${1442 + s * 15}L${1939 - s * 2} ${1459 + s * 16}`
    if (i !== 1 && i !== 4) d += `L${2030 - s * 14} ${1560 + s * 1}`
    d += `M${2036 - s * 14} ${1566 + s * 12}L${2064 - s * 10} ${1602 + s * 6}L${2084 - s * 17} 1642`
  }
  return d
})()

/* Local streets: seeded so that the pattern is the same on every load. */
let seed = 41
const rnd = () => ((seed = (seed * 16807) % 2147483647) / 2147483647)
const bearing = (x, y) => Math.sin(x / 170) * 0.7 + Math.cos(y / 130 + x / 400) * 0.7

const grids = (() => {
  let d = ''
  for (let x = 640; x < 1900; x += 46) {
    for (let y = 1050; y < 1650; y += 44) {
      if (x < 1100 && rnd() < 0.22) continue
      const cx = x + rnd() * 14, cy = y + rnd() * 14
      const a = bearing(x, y)
      const c = Math.cos(a), s = Math.sin(a)
      const line = (u1, v1, u2, v2) => {
        d += `M${r(cx + u1 * c - v1 * s)} ${r(cy + u1 * s + v1 * c)}L${r(cx + u2 * c - v2 * s)} ${r(cy + u2 * s + v2 * c)}`
      }
      for (let v = -22; v <= 22; v += 8 + rnd() * 4) line(-16 - rnd() * 10, v, 14 + rnd() * 12, v)
      for (let u = -20; u <= 20; u += 15 + rnd() * 7) line(u, -20 - rnd() * 6, u, 16 + rnd() * 10)
    }
  }
  return d
})()

const lanes = (() => {
  let d = ''
  for (let i = 0; i < 520; i++) {
    let x = 12 + rnd() * (i % 4 ? 600 : 950), y = 1035 + rnd() * 605
    let a = rnd() * 6.28
    const p = [[x, y]]
    for (let k = 0; k < 3 + rnd() * 3; k++) {
      a += (rnd() - 0.5) * 1.5
      x += Math.cos(a) * 10
      y += Math.sin(a) * 10
      p.push([x, y])
    }
    d += curve(p, false, 0.16)
  }
  return d
})()

const collectors = (() => {
  let d = ''
  for (let i = 0; i < 190; i++) {
    let x = 680 + rnd() * 880, y = 1040 + rnd() * 590
    const turn = i % 2 ? Math.PI / 2 : 0
    const p = [[x, y]]
    for (let k = 0; k < 3; k++) {
      const a = bearing(x, y) + turn
      x += Math.cos(a) * 19
      y += Math.sin(a) * 19
      p.push([x, y])
    }
    d += curve(p, false, 0.16)
  }
  return d
})()

const greens = (() => {
  let d = ''
  for (let i = 0; i < 150; i++) {
    const x = 20 + rnd() * 1500, y = 1040 + rnd() * 595
    const w = 2 + rnd() * 6, h = 2 + rnd() * 4, k = rnd() * 3
    d += `M${r(x - w)} ${r(y - h + k)}L${r(x + w - k)} ${r(y - h)}L${r(x + w)} ${r(y + h - k)}L${r(x - w + k)} ${r(y + h)}Z`
  }
  return d
})()

const layers = [
  { d: wood, c: 'wood' }, { d: greens, c: 'park' }, { d: park, c: 'park' }, { d: sand, c: 'sand' }, { d: olive, c: 'olive' }, { d: pink, c: 'pink' },
  { d: lanes, c: 'lane' }, { d: grids, c: 'lane' }, { d: collectors, c: 'col-case' }, { d: collectors, c: 'col' },
  { d: lakes, c: 'water' }, { d: sea, c: 'water' }, { d: rivers, c: 'river' }, { d: wideRivers, c: 'river wide' }, { d: creeks, c: 'river' },
  { d: islands, c: 'land' }, { d: greenIslands, c: 'park' }, { d: airport, c: 'airport' }, { d: taxiways, c: 'taxi' }, { d: runways, c: 'runway' }, { d: ferries, c: 'ferry' },
  { d: streets, c: 'street-case' }, { d: arterials, c: 'art-case' }, { d: streets, c: 'street' }, { d: arterials, c: 'art' },
  { d: ramps, c: 'ramp' }, { d: trunk, c: 'road-case' }, { d: trunk, c: 'trunk' }, { d: motorway, c: 'road-case' }, { d: motorway, c: 'motorway' },
]

/* text, left, baseline, width, size, kind, rotation */
const labels = [
  ['dbury', 11, 1048, 44, 19, 'place'], ['Great Meadows National', 35, 1171, 187, 18.5, 'nature'], ['Wildlife Refuge', 70, 1193, 116, 18.5, 'nature'],
  ['Wayland', 145.5, 1322, 84, 23, 'place'], ['Weston', 402.5, 1301, 73, 23, 'place'], ['Prospectville', 561.5, 1126, 102.5, 19, 'place'],
  ['Cedarwood', 571, 1274, 90, 19, 'place'], ['Rice Rd', 281.5, 1483, 50, 16, 'road', -67], ['North Ave', 485.5, 1147, 66, 16, 'road', 62],
  ['Pine St', 208, 1604, 50, 16, 'road', 2], ['Cochituate', 125, 1570, 94, 20, 'place'], ['nville', 11, 1542, 45, 19, 'place'], ['d', 7, 1491, 9, 19, 'place'],
  ['Wellesley Fells', 322.6, 1642, 118, 20, 'place'], ['elo Rd', 739, 1038, 41, 16, 'road', 18], ['Lakeview', 674, 1086, 72.5, 19, 'place'],
  ['Eastview Park', 770, 1097, 110.5, 19, 'place'], ['Mill St', 913, 1138, 44, 16, 'road', -82], ['Belmont', 940.5, 1127, 85.5, 23, 'place'],
  ['Bentley University', 725, 1210, 139.5, 18.5, 'school'], ['Waltham', 683.5, 1248.5, 99, 25, 'city'], ['Watertown', 908, 1275, 114, 24.5, 'city'],
  ['BEMIS', 847, 1273, 50, 16.5, 'hood'], ['NONANTUM', 828, 1322.5, 104, 16.5, 'hood'], ['THE ISLAND', 643, 1339, 98, 16.5, 'hood'],
  ['Newtonville', 824, 1397, 99, 19.5, 'place'], ['Auburndale', 624.5, 1419, 105, 20, 'place'], ['Newton', 808, 1476, 84, 25, 'city'],
  ['Newton Centre', 829, 1512, 126, 20, 'place'], ['Waban', 731, 1532, 60.5, 20, 'place'], ['Thompsonville', 901, 1583, 124.5, 20, 'place'],
  ['Worcester St', 609.5, 1609, 89, 16, 'road', -6], ['CHESTNUT', 989, 1501.5, 97, 16.5, 'hood'], ['HILL', 1018, 1522, 40, 16.5, 'hood'],
  ['BRIGHTON', 1033, 1396.5, 94, 16.5, 'hood'], ['STRAWBERRY', 1039, 1213, 111, 16.5, 'hood'], ['HILL', 1077, 1231.5, 36, 16.5, 'hood'],
  ['Harvard University', 1143.5, 1321, 143.5, 18.5, 'school'], ['ALLSTON', 1144.5, 1365, 82.5, 16.5, 'hood'], ['DAVIS', 1207, 1113, 46, 16.5, 'hood'],
  ['SQUARE', 1197, 1132, 65, 16.5, 'hood'], ['Somerville', 1268.5, 1177, 120.5, 25, 'city'], ['Cambridge', 1236.5, 1251.5, 132, 27, 'city'],
  ['CHARLESTOWN', 1423, 1232, 139, 16.5, 'hood'], ['Everett', 1492, 1054, 75, 24, 'city'], ['Revere', 1675.5, 1054, 72.5, 24, 'city'],
  ['Chelsea', 1576.5, 1152.5, 87, 25, 'city'], ['JEFFRIES', 1582, 1296.5, 76, 16.5, 'hood'], ['POINT', 1596, 1316, 48, 16.5, 'hood'],
  ['Boston', 1461, 1341.5, 96, 31, 'city'], ['BACK BAY', 1370, 1393, 91, 16.5, 'hood'], ['SOUTH END', 1373, 1448, 105.5, 16.5, 'hood'],
  ['SOUTH', 1517, 1485.5, 60, 16.5, 'hood'], ['BOSTON', 1511, 1505, 72.5, 16.5, 'hood'], ['Brookline', 1182, 1507.5, 106, 25, 'city'],
  ['ROXBURY', 1307, 1546, 84, 16.5, 'hood'], ['JAMAICA', 1198, 1625, 79.5, 16.5, 'hood'], ['PLAIN', 1211, 1645, 53, 16.5, 'hood'],
  ['SAVIN HILL', 1466, 1618, 90.5, 16.5, 'hood'], ['Beachmont', 1772, 1126.5, 98, 19.5, 'place'], ['Winthrop', 1790, 1251, 96, 24.5, 'city'],
  ['Fort Warren', 2023.5, 1578, 103, 19.5, 'place'], ['Stony Beach', 2144, 1651.5, 92, 19.5, 'place'],
]

const interstates = [[95, 630, 1065], [90, 572.5, 1455], [90, 400, 1477.5], [90, 297.5, 1536], [90, 173, 1610], [90, 985.5, 1343.5], [95, 744, 1589.5], [93, 1330.5, 1062], [90, 1565.5, 1399.5]]
const routes = [[30, 352, 1484.5], [9, 523, 1632], [2, 1076, 1076], [30, 1133.5, 1435.5], [30, 1022, 1456], [16, 660.5, 1521.5], [9, 798.5, 1581.5], [16, 1375.5, 1071.5], [16, 1593, 1076]]
const schools = [[794, 1180], [1214.5, 1292]]
const pins = [
  ['green', 1519, 1353.5], ['red', 1107, 1401.5], ['green', 1423.5, 1385], ['red', 1603.5, 1401.5], ['red', 1053.5, 1483],
]
</script>

<template>
  <main class="page">
    <h1>Hello, test</h1>
    <p class="logout"><a href="#">Logout</a></p>

    <div class="columns">
      <section>
        <p>Past Journeys:</p>
        <ul>
          <li v-for="name in pastJourneys" :key="name">
            {{ name }}
            <button>View Journey</button>
          </li>
        </ul>
      </section>
      <section>
        <p>Favorite Trees:</p>
        <ul>
          <li v-for="id in favoriteTrees" :key="id">
            {{ id }}
            <button>Create Journey</button>
          </li>
        </ul>
      </section>
      <section>
        <p>Random Trees:</p>
        <ul>
          <li v-for="id in randomTrees" :key="id">
            {{ id }}
            <button>Create Journey</button>
            <button>Favorite</button>
          </li>
        </ul>
      </section>
    </div>

    <p>Legend</p>
    <ul class="legend">
      <li>Favorite Trees: Green</li>
      <li>Random Trees: Red</li>
    </ul>

    <svg class="map" viewBox="12 1035 3000 605" width="3000" height="605">
      <defs>
        <radialGradient id="shade">
          <stop offset="0" stop-color="#000" stop-opacity=".5" />
          <stop offset="1" stop-color="#000" stop-opacity="0" />
        </radialGradient>
        <path id="post-road" d="M288 1338Q332 1315 388 1309" />
      </defs>

      <path v-for="(l, i) in layers" :key="i" :d="l.d" :class="l.c" />

      <g class="tree" transform="translate(127.5 1140)">
        <path d="M-3 8.500h7v-1l-2.500-1v-4l3.500 .5q3.500-.5 3-3.500q0-3-3-3.500q-1-3.500-5-3.500q-4 0-5 3q-4 .5-4 4q.5 3.500 4 3.500l3.500-.5v4.500l-1.500 .5z" />
      </g>
      <g v-for="s in schools" :key="s[0]" class="cap" :transform="`translate(${s[0]} ${s[1]})`">
        <path d="M0-7L8-4.500L0-1.500L-5.500-3.200V6.500H-7.500V-4.500zM-4.500-1.500L0 .2L5.500-1.500V1.500Q1 .5 0 3Q-1 .5-4.500 1.500zM-4.500 3Q-1.500 2 0 5Q1.500 2 5.500 3V7H-4.500z" />
      </g>

      <text
        v-for="(t, i) in labels" :key="'t' + i" :class="t[5]" :font-size="t[4]"
        :transform="`translate(${t[1]} ${t[2]}) rotate(${t[6] || 0})`" :textLength="t[3]"
        :lengthAdjust="t[5] === 'hood' ? 'spacing' : 'spacingAndGlyphs'"
      >{{ t[0] }}</text>
      <text class="road" font-size="16"><textPath href="#post-road" textLength="102" lengthAdjust="spacingAndGlyphs">Boston Post Rd</textPath></text>

      <g v-for="(s, i) in interstates" :key="'i' + i" :transform="`translate(${s[1]} ${s[2]})`">
        <path class="shield-edge" d="M-10-13.500Q-5-10.500 0-13.500Q5-10.500 10-13.500Q15-8 14-1Q12 9 0 14Q-12 9-14-1Q-15-8-10-13.500Z" />
        <path class="shield-blue" d="M-13-6H13Q14 8 0 13Q-14 8-13-6Z" />
        <path class="shield-red" d="M-12.500-7Q-12-10-9.500-12.500Q-5-9.500 0-12.500Q5-9.500 9.500-12.500Q12-10 12.500-7Z" />
        <text class="num light" y="6">{{ s[0] }}</text>
      </g>
      <g v-for="(s, i) in routes" :key="'r' + i" :transform="`translate(${s[1]} ${s[2]})`">
        <circle class="disc" r="14" />
        <text class="num" y="5">{{ s[0] }}</text>
      </g>
      <g transform="translate(262 1034.500)">
        <ellipse class="disc" rx="19" ry="13.500" />
        <text class="num" y="5">126</text>
      </g>
      <g transform="translate(71 1314)">
        <path class="disc" d="M-9-13Q-4.500-10.500 0-13Q4.500-10.500 9-13L14-7.500Q10.500-2 14 3.500Q15 10 7.500 11Q3 11 0 13.500Q-3 11-7.500 11Q-15 10-14 3.500Q-10.500-2-14-7.500Z" />
        <text class="num" y="5.500">20</text>
      </g>

      <g v-for="p in pins" :key="p[1]" :transform="`translate(${p[1]} ${p[2]})`">
        <ellipse cx="0" cy="-1" rx="17" ry="9" fill="url(#shade)" />
        <path :class="['pin', p[0]]" d="M0 0Q-3-7-14.500-21Q-19.800-27.500-19.800-33.500A19.800 19.700 0 0 1 19.800-33.500Q19.800-27.500 14.500-21Q3-7 0 0Z" />
        <circle cy="-33.500" r="8.500" fill="#fff" />
      </g>
    </svg>
  </main>
</template>

<style>
html,
body {
  margin: 0;
  background: #fff;
  overflow: hidden;
}
</style>

<style scoped>
.page {
  height: 1640px;
  padding: 12px 12px 0;
  box-sizing: border-box;
  overflow: hidden;
  font: 24px/28px 'Liberation Serif', 'Times New Roman', serif;
  color: #000;
}
h1 {
  margin: 0 0 32px;
  font-size: 48px;
  line-height: 55px;
}
p {
  margin: 0 0 24px;
}
a {
  color: #551a8b;
  text-decoration: underline;
  text-decoration-thickness: 2px;
}
.columns {
  display: flex;
}
.columns section {
  width: 33%;
}
ul {
  margin: 0;
  padding-left: 60px;
}
.legend {
  margin-bottom: 24px;
}
button {
  display: block;
  height: 32px;
  margin: 0 0 24px;
  padding: 0 11px;
  border: 1px solid #767676;
  border-radius: 4px;
  background: #efefef;
  color: #000;
  font: 20px/28px 'Liberation Sans', Arial, sans-serif;
}
.map {
  display: block;
  background: #efe9e3;
  font-family: Roboto, 'Open Sans', sans-serif;
}
.map path {
  stroke-linejoin: round;
  stroke-linecap: round;
}
.land { fill: #efe9e3; }
.wood { fill: #d5e6c3; }
.park { fill: #bee3a2; }
.sand { fill: #e6dfbf; }
.olive { fill: #dbdfc1; }
.pink { fill: #e7d3da; }
.water { fill: #8bcced; }
.airport { fill: #d7d7e2; }
.runway { fill: none; stroke: #c8c8dc; stroke-width: 6; }
.taxi { fill: none; stroke: #c8c8dc; stroke-width: 2; }
.river { fill: none; stroke: #8bcced; stroke-width: 3.5; }
.river.wide { stroke-width: 8; }
.ferry { fill: none; stroke: #73b1e2; stroke-width: 0.9; opacity: .8; }
.lane { fill: none; stroke: #fff; stroke-width: 1.1; opacity: .9; }
.col-case { fill: none; stroke: #d9d7e6; stroke-width: 3.8; }
.col { fill: none; stroke: #fff; stroke-width: 2.3; }
.street-case { fill: none; stroke: #d6d5e6; stroke-width: 4.9; }
.art-case { fill: none; stroke: #d6d5e6; stroke-width: 6.8; }
.street { fill: none; stroke: #fff; stroke-width: 3.1; }
.art { fill: none; stroke: #fff; stroke-width: 4.9; }
.ramp { fill: none; stroke: #f4ac78; stroke-width: 1.3; }
.road-case { fill: none; stroke: #fbf3ea; stroke-width: 7.5; }
.trunk { fill: none; stroke: #f0d474; stroke-width: 4.6; }
.motorway { fill: none; stroke: #f5a86c; stroke-width: 5.4; }
.tree { fill: #3d8020; }
.cap { fill: #94791f; }
.map text {
  paint-order: stroke;
  stroke: rgba(255, 255, 255, .85);
  stroke-width: 2.5px;
  stroke-linejoin: round;
}
.map .place { fill: #2b2b30; }
.map .city { fill: #000; font-weight: 500; }
.map .road { fill: #36363c; }
.map .hood { fill: #6b74a4; }
.map .nature { fill: #3f7a27; font-weight: 500; }
.map .school { fill: #83701f; font-weight: 500; }
.map .num {
  fill: #222;
  stroke: none;
  font-size: 13.500px;
  font-weight: 700;
  text-anchor: middle;
}
.map .num.light { fill: #fff; font-size: 14px; }
.shield-edge { fill: #fff; }
.shield-blue { fill: #3f4fa3; }
.shield-red { fill: #c03a32; }
.disc { fill: #fff; stroke: #2c2c30; stroke-width: 1.4; }
.pin.red { fill: #bb2b20; stroke: #98231a; }
.pin.green { fill: #3f6b22; stroke: #33591b; }
</style>
